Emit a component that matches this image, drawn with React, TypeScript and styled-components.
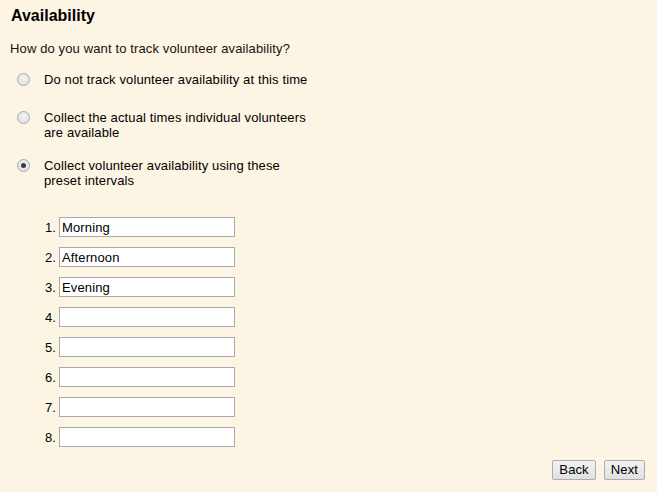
import React from "react";
import styled, { createGlobalStyle } from "styled-components";

const Global = createGlobalStyle`
  html, body { margin: 0; padding: 0; background: #fdf5e4; }
  body { font-family: "Liberation Sans", Arial, sans-serif; color: #000; }
`;

const Page = styled.div`
  width: 657px;
  height: 492px;
  box-sizing: border-box;
  padding: 7px 12px 0 10px;
  display: flex;
  flex-direction: column;
  font-size: 13px;
  letter-spacing: 0.13px;
`;

const Title = styled.h1`
  margin: 0 0 0 1px;
  font-size: 16px;
  line-height: 18px;
  font-weight: bold;
  letter-spacing: 0;
`;

const Question = styled.p`
  margin: 16px 0 0 0;
  line-height: 15px;
  color: #1a1010;
`;

const Options = styled.div`
  display: flex;
  flex-direction: column;
  margin-top: 16px;
`;

const OptionRow = styled.label<{ $space?: number }>`
  display: flex;
  align-items: flex-start;
  gap: 14px;
  box-sizing: border-box;
  padding-left: 7px;
  margin-top: ${(p) => p.$space ?? 0}px;
  line-height: 15px;
  width: 304px;
`;

const Radio = styled.span<{ $checked?: boolean }>`
  flex: none;
  width: 11px;
  height: 11px;
  margin-top: 1px;
  border-radius: 50%;
  border: 1px solid #a9a9a9;
  background: radial-gradient(circle at 50% 40%, #f4f4f4 0%, #dcdcdc 100%);
  position: relative;
  &::after {
    content: "";
    display: ${(p) => (p.$checked ? "block" : "none")};
    position: absolute;
    left: 3px;
    top: 3px;
    width: 5px;
    height: 5px;
    border-radius: 50%;
    background: #3a3a3a;
  }
`;

const Intervals = styled.div`
  display: flex;
  flex-direction: column;
  gap: 10px;
  margin-top: 29px;
  padding-left: 34px;
`;

const IntervalRow = styled.div`
  display: flex;
  align-items: center;
  gap: 3px;
`;

const Num = styled.span`
  width: 12px;
  text-align: right;
`;

const Field = styled.input`
  width: 176px;
  height: 20px;
  box-sizing: border-box;
  border: 1px solid #a9a9a9;
  background: #fff;
  padding: 0 2px;
  margin: 0;
  font-family: "Liberation Sans", Arial, sans-serif;
  font-size: 13px;
  letter-spacing: 0.13px;
  color: #000;
  outline: none;
`;

const Footer = styled.div`
  display: flex;
  justify-content: flex-end;
  gap: 8px;
  margin-top: 13px;
`;

const Button = styled.button`
  height: 20px;
  padding: 0 6px;
  box-sizing: border-box;
  border: 1px solid #adadad;
  border-radius: 2px;
  background: linear-gradient(#f2f2f2, #e0e0e0);
  font-family: "Liberation Sans", Arial, sans-serif;
  font-size: 13px;
  letter-spacing: 0.13px;
  line-height: 18px;
  color: #000;
`;

const values = ["Morning", "Afternoon", "Evening", "", "", "", "", ""];

export default function App() {
  return (
    <>
      <Global />
      <Page>
        <Title>Availability</Title>
        <Question>How do you want to track volunteer availability?</Question>
        <Options>
          <OptionRow>
            <Radio />
            <span>Do not track volunteer availability at this time</span>
          </OptionRow>
          <OptionRow $space={23}>
            <Radio />
            <span>Collect the actual times individual volunteers are available</span>
          </OptionRow>
          <OptionRow $space={18}>
            <Radio $checked />
            <span>Collect volunteer availability using these preset intervals</span>
          </OptionRow>
        </Options>
        <Intervals>
          {values.map((v, i) => (
            <IntervalRow key={i}>
              <Num>{i + 1}.</Num>
              <Field defaultValue={v} />
            </IntervalRow>
          ))}
        </Intervals>
        <Footer>
          <Button>Back</Button>
          <Button>Next</Button>
        </Footer>
      </Page>
    </>
  );
}
